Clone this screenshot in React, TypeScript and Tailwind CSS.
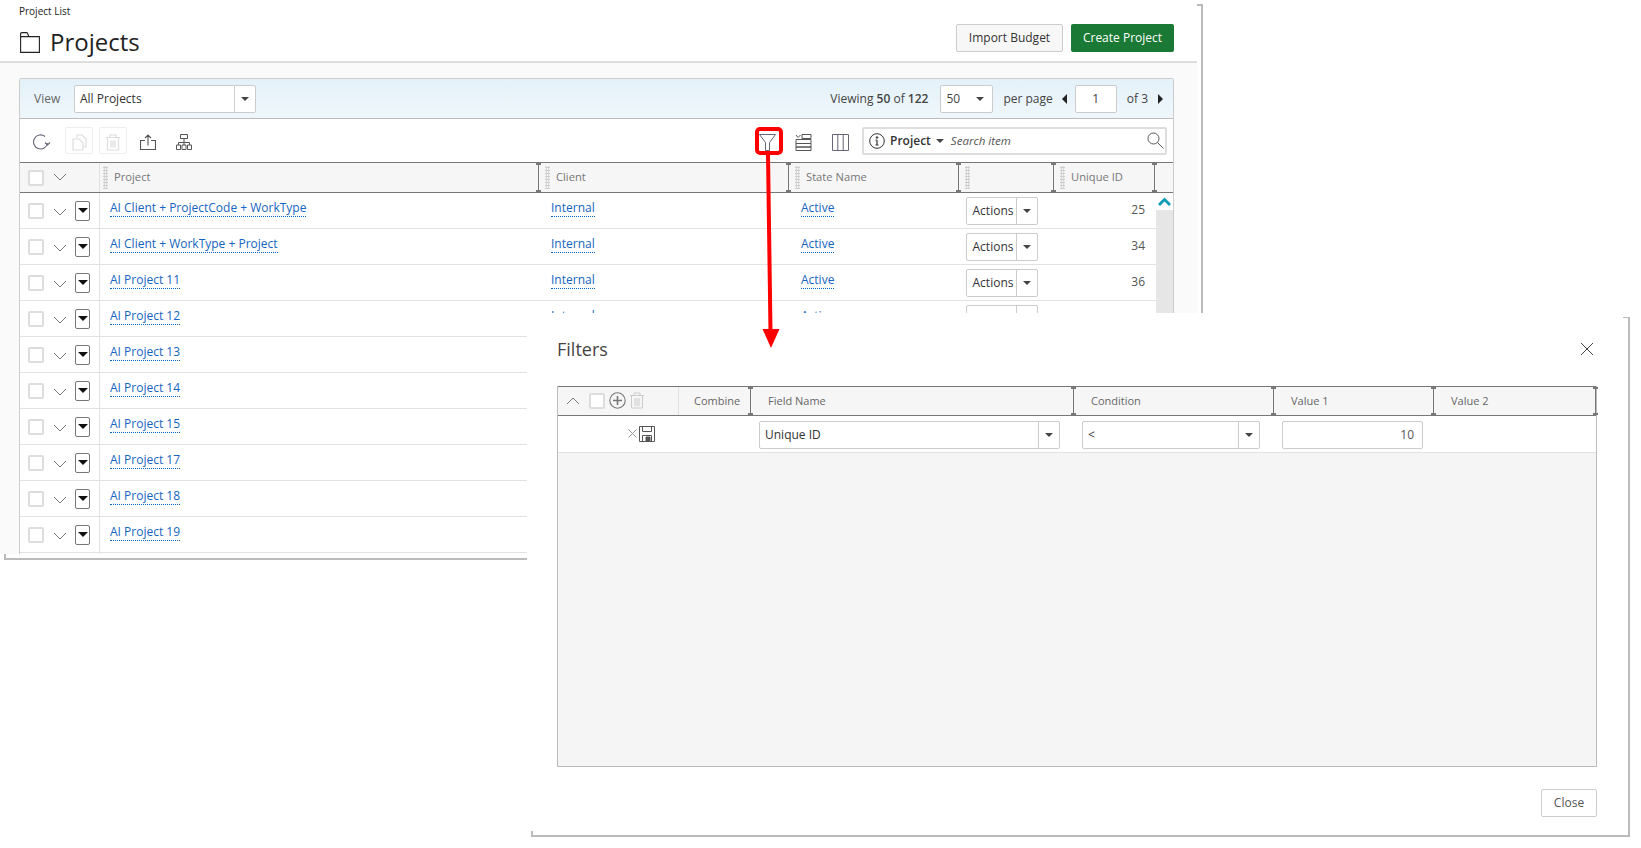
import React from "react";

const rows = ["AI Client + ProjectCode + WorkType", "AI Client + WorkType + Project", "AI Project 11", "AI Project 12", "AI Project 13", "AI Project 14", "AI Project 15", "AI Project 17", "AI Project 18", "AI Project 19"];
const ids = ["25", "34", "36"];

function Caret({ className = "" }: { className?: string }) {
  return <span className={`inline-block w-0 h-0 border-x-[4px] border-x-transparent border-t-[4px] border-t-[#444] ${className}`} />;
}

function Chevron({ up = false }: { up?: boolean }) {
  return (
    <svg width="14" height="9" viewBox="0 0 14 9" fill="none" stroke="#777" strokeWidth="1">
      <path d={up ? "M1 8L7 2l6 6" : "M1 1l6 6 6-6"} />
    </svg>
  );
}

function CheckBox() {
  return <span className="block w-[16px] h-[16px] border-2 border-[#ddd] rounded-[2px] bg-white" />;
}

function Grip() {
  return <span className="block w-[5px] h-[23px] shrink-0 bg-[radial-gradient(#ccc_1px,transparent_1px)] bg-[length:2.5px_3px]" />;
}

function Resizer() {
  return (
    <span className="relative block w-[1px] h-full bg-[#777] shrink-0">
      <span className="absolute top-0 left-[-2px] w-[5px] h-[2px] bg-[#777]" />
      <span className="absolute bottom-0 left-[-2px] w-[5px] h-[2px] bg-[#777]" />
    </span>
  );
}

function HeadCell({ w, label, first = false }: { w: string; label: string; first?: boolean }) {
  return (
    <div className={`${w} h-full flex items-center shrink-0`}>
      <div className={first ? "ml-[3px] mr-[6px]" : "ml-[6px] mr-[6px]"}><Grip /></div>
      <span className="flex-1 text-[11.2px] text-[#777]">{label}</span>
      <Resizer />
    </div>
  );
}

function ToolIcon({ children, boxed = false }: { children: React.ReactNode; boxed?: boolean }) {
  return (
    <span className={`h-[27px] flex items-center justify-center rounded-[2px] pt-[3px] ${boxed ? "w-[28px] border border-[#eee]" : "w-[28px]"}`}>
      {children}
    </span>
  );
}

function LinkText({ children }: { children: React.ReactNode }) {
  return <a className="text-[12px] leading-[17px] text-[#1565c0] border-b border-dotted border-[#0a66c2] mt-[-5px]">{children}</a>;
}

function Row({ name, id, index }: { name: string; id?: string; index: number }) {
  const full = index < 4;
  return (
    <div className="h-[36px] flex border-b border-[#e2e2e2] shrink-0">
      <div className="w-[80px] flex items-center border-r border-[#e2e2e2] shrink-0">
        <span className="ml-[8px]"><CheckBox /></span>
        <span className="ml-[9px] mt-[3px]"><Chevron /></span>
        <span className="ml-[8px] w-[15px] h-[20px] border border-[#777] rounded-[2px] flex items-center justify-center bg-white">
          <span className="block w-0 h-0 border-x-[5px] border-x-transparent border-t-[5px] border-t-[#111]" />
        </span>
      </div>
      <div className="w-[450px] flex items-center pl-[10px] shrink-0">{name && <LinkText>{name}</LinkText>}</div>
      {full && (
        <>
          <div className="w-[251px] flex items-center pl-[1px] shrink-0"><LinkText>Internal</LinkText></div>
          <div className="w-[165px] flex items-center shrink-0"><LinkText>Active</LinkText></div>
          <div className="w-[90px] flex items-center shrink-0">
            <div className="w-[72px] h-[28px] border border-[#ccc] rounded-[2px] flex items-center bg-white">
              <span className="w-[50px] text-center text-[12px] text-[#333] border-r border-[#ccc] leading-[26px] pl-[3px]">Actions</span>
              <span className="flex-1 flex justify-center"><Caret /></span>
            </div>
          </div>
          <div className="w-[100px] flex items-center justify-end pr-[11px] pb-[2px] text-[12px] text-[#555] shrink-0">{id}</div>
        </>
      )}
    </div>
  );
}

function SelectBox({ w, label, pad = "pl-[6px]" }: { w: string; label: string; pad?: string }) {
  return (
    <div className={`${w} h-[28px] border border-[#ccc] rounded-[2px] bg-white flex items-center shrink-0`}>
      <span className={`flex-1 ${pad} text-[12px] text-[#333] leading-[26px]`}>{label}</span>
      <span className="w-[21px] h-full border-l border-[#ccc] flex items-center justify-center"><Caret /></span>
    </div>
  );
}

export default function App() {
  return (
    <div className="relative w-[1641px] h-[848px] bg-white overflow-hidden [font-family:'Open_Sans',sans-serif]">
      {/* background window frame */}
      <div className="absolute left-[4px] top-[4px] w-[1199px] h-[556px] border-r-2 border-b-2 border-[#bbb]" />
      <span className="absolute left-[1197px] top-[4px] w-[5px] h-[2px] bg-[#bbb]" />
      <span className="absolute left-[4px] top-[553px] w-[2px] h-[6px] bg-[#bbb]" />

      {/* page */}
      <div className="absolute left-0 top-0 w-[1197px] h-[554px] bg-[#fafafa] overflow-hidden flex flex-col">
        <header className="h-[63px] bg-white border-b-2 border-[#ddd] pl-[20px] pr-[23px] shrink-0">
          <div className="text-[10px] leading-[14px] pt-[4px] -ml-px text-[#222] h-[18px]">Project List</div>
          <div className="flex items-start justify-between mt-[6px]">
            <div className="flex items-center mt-[3px]">
              <svg width="20" height="21" viewBox="0 0 20 21" fill="none" stroke="#222" strokeWidth="1.1">
                <path d="M.6 20.400V2q0-1.400 1.400-1.400h5l2 4h10.400v15.800zM.6 4.600H9" />
              </svg>
              <h1 className="ml-[10px] text-[24px] leading-[30px] text-[#222]">Projects</h1>
            </div>
            <div className="flex gap-[8px]">
              <button className="w-[107px] h-[28px] border border-[#ccc] rounded-[2px] bg-[#f7f7f7] text-[12px] text-[#333]">Import Budget</button>
              <button className="w-[103px] h-[28px] rounded-[2px] bg-[#1a7a35] text-[12px] text-white">Create Project</button>
            </div>
          </div>
        </header>

        <section className="ml-[19px] w-[1155px] mt-[15px] bg-white border border-[#ccc] rounded-t-[2px] flex flex-col shrink-0">
          <div className="h-[40px] flex items-center bg-gradient-to-b from-[#e4f1f9] to-[#eff7fb] border-b border-[#bbb] pl-[14px] pr-[10px] text-[12px] text-[#444]">
            <span className="text-[#666] w-[40px]">View</span>
            <SelectBox w="w-[182px]" label="All Projects" pad="pl-[5px]" />
            <span className="ml-auto">Viewing <b className="font-semibold">50</b> of <b className="font-semibold">122</b></span>
            <div className="w-[53px] h-[28px] border border-[#ccc] rounded-[2px] bg-white ml-[12px] flex items-center justify-between pl-[5px] pr-[8px]">
              <span>50</span><Caret />
            </div>
            <span className="ml-[10px]">per page</span>
            <span className="ml-[9px] w-0 h-0 border-y-[5px] border-y-transparent border-r-[5px] border-r-[#222]" />
            <div className="ml-[8px] w-[42px] h-[28px] border border-[#ccc] rounded-[2px] bg-white flex items-center justify-center">1</div>
            <span className="ml-[10px]">of 3</span>
            <span className="ml-[10px] w-0 h-0 border-y-[5px] border-y-transparent border-l-[5px] border-l-[#222]" />
          </div>

          <div className="h-[43px] flex items-center pl-[7px] pr-[6px]">
            <ToolIcon>
              <svg width="19" height="17" viewBox="0 0 19 17" fill="none" stroke="#667" strokeWidth="1.1">
                <path d="M15.500 9a7 7 0 1 1-2.500-6.500" /><path d="M13 8.500l2.500 2.500L18 8.500" />
              </svg>
            </ToolIcon>
            <span className="ml-[10px]"><ToolIcon boxed>
              <svg width="15" height="17" viewBox="0 0 15 17" fill="none" stroke="#ddd" strokeWidth="1.2">
                <path d="M5 4V1h5l4 4v8h-3" /><path d="M1 5h6l4 4v7H1z" />
              </svg>
            </ToolIcon></span>
            <span className="ml-[6px]"><ToolIcon boxed>
              <svg width="14" height="17" viewBox="0 0 14 17" fill="none" stroke="#ddd" strokeWidth="1.2">
                <path d="M0 3.500h14M4 3.500V1h6v2.500M1.500 3.500V16h11V3.500M5 6.500v7M7 6.500v7M9 6.500v7" />
              </svg>
            </ToolIcon></span>
            <span className="ml-[7px]"><ToolIcon>
              <svg width="16" height="16" viewBox="0 0 16 16" fill="none" stroke="#555" strokeWidth="1.100">
                <path d="M5 6.500H.5v9h15v-9H11M8 11.500V1M5 4l3-3 3 3" />
              </svg>
            </ToolIcon></span>
            <span className="ml-[8px]"><ToolIcon>
              <svg width="16" height="16" viewBox="0 0 16 16" fill="none" stroke="#555" strokeWidth="1">
                <path d="M4.500.500h7v4h-7zM8 4.500v4M2.500 11V8.500h11V11M8 8.500V11M.5 11h4v4.500h-4zM6 11h4v4.500H6zM11.500 11h4v4.500h-4z" />
              </svg>
            </ToolIcon></span>

            <span className="ml-auto mr-[19px] pt-[3px]">
              <svg className="block" width="17" height="17" viewBox="0 0 17 17" fill="none" stroke="#667" strokeWidth="1">
                <path d="M.5.500h16L10.500 8.500v8h-4v-8z" />
              </svg>
            </span>
            <span className="mr-[20px] pt-[3px]">
              <svg className="block" width="17" height="17" viewBox="0 0 17 17" fill="none" stroke="#555" strokeWidth="1">
                <path d="M1 1l2 2.500L5.500 1M7 .5h9v4H7zM1 5.500h15v4H1zM1 9.500h15v3.500H1zM1 13h15v3.500H1z" />
              </svg>
            </span>
            <span className="mr-[13px] pt-[3px]">
              <svg className="block" width="17" height="17" viewBox="0 0 17 17" fill="none" stroke="#667" strokeWidth="1">
                <path d="M.5.500h16v16H.5zM5.800.500v16M11.200.500v16" />
              </svg>
            </span>
            <div className="w-[305px] h-[28px] border-2 border-[#ddd] rounded-[2px] flex items-center pl-[5px] pr-[1px] bg-white">
              <svg width="16" height="16" viewBox="0 0 16 16" fill="none" stroke="#333" strokeWidth="1">
                <circle cx="8" cy="8" r="7.300" /><path d="M8 7v5M6.500 12h3M6.500 7H8" strokeWidth="1.200" /><circle cx="8" cy="4.500" r=".8" fill="#333" />
              </svg>
              <span className="ml-[5px] text-[12px] font-semibold text-[#333]">Project</span>
              <Caret className="ml-[5px]" />
              <span className="ml-[7px] flex-1 text-[11.5px] italic text-[#555]">Search item</span>
              <svg width="17" height="17" viewBox="0 0 17 17" fill="none" stroke="#555" strokeWidth="1">
                <circle cx="6.500" cy="6.500" r="5.500" /><path d="M10.500 10.500l6 6" />
              </svg>
            </div>
          </div>

          <div className="h-[31px] flex items-center bg-[#f6f6f6] border-y border-[#777]">
            <div className="w-[80px] h-full flex items-center border-r border-[#e2e2e2] shrink-0">
              <span className="ml-[8px]"><CheckBox /></span>
              <span className="ml-[9px]"><Chevron /></span>
            </div>
            <HeadCell w="w-[439px]" label="Project" first />
            <HeadCell w="w-[250px]" label="Client" />
            <HeadCell w="w-[170px]" label="State Name" />
            <HeadCell w="w-[95px]" label="" />
            <HeadCell w="w-[101px]" label="Unique ID" />
          </div>

          <div className="flex">
            <div className="w-[1136px] flex flex-col shrink-0">
              {rows.map((r, i) => <Row key={r} name={r} id={ids[i]} index={i} />)}
              <Row name="" index={10} />
            </div>
            <div className="flex-1 bg-[#e6e6e6]">
              <div className="h-[17px] bg-white flex items-start justify-center pt-[4px]">
                <svg width="13" height="9" viewBox="0 0 13 9" fill="none" stroke="#0a9bb5" strokeWidth="2.800"><path d="M1 8l5.500-5.500L12 8" /></svg>
              </div>
            </div>
          </div>
        </section>
      </div>

      {/* dialog */}
      <div className="absolute left-[527px] top-[313px] w-[1114px] h-[535px] bg-white">
        <div className="absolute left-[4px] top-[4px] w-[1099px] h-[520px] border-r-2 border-b-2 border-[#bbb]" />
        <span className="absolute left-[1096px] top-[4px] w-[5px] h-[1px] bg-[#bbb]" />
        <span className="absolute left-[4px] top-[518px] w-[2px] h-[5px] bg-[#bbb]" />
        <div className="relative pl-[30px] pr-[44px] pt-[23px] flex flex-col h-[504px]">
          <div className="flex items-center justify-between h-[28px]">
            <h2 className="text-[18px] text-[#444]">Filters</h2>
            <svg className="mr-[3px] mt-[-2px]" width="14" height="14" viewBox="0 0 14 14" fill="none" stroke="#444" strokeWidth="1"><path d="M1 1l12 12M13 1L1 13" /></svg>
          </div>
          <div className="mt-[22px] w-[1040px] h-[382px] border border-[#bbb] bg-[#f5f5f5] flex flex-col">
            <div className="h-[30px] flex bg-[#f6f6f6] border-y border-y-[#777] -mt-px shrink-0 items-center">
              <div className="w-[121px] h-full flex items-center border-r border-[#e2e2e2] shrink-0">
                <span className="ml-[8px]"><Chevron up /></span>
                <span className="ml-[9px]"><CheckBox /></span>
                <svg className="ml-[4px]" width="17" height="17" viewBox="0 0 17 17" fill="none" stroke="#777" strokeWidth="1.100"><circle cx="8.500" cy="8.500" r="7.700" /><path d="M8.500 4v9M4 8.500h9" strokeWidth="1.600" /></svg>
                <svg className="ml-[4px]" width="14" height="17" viewBox="0 0 14 17" fill="none" stroke="#ccc" strokeWidth="1"><path d="M0 3.500h14M4 3.500V1h6v2.500M1.500 3.500V16h11V3.500M5 6v8M7 6v8M9 6v8" /></svg>
              </div>
              <div className="w-[72px] h-full flex items-center shrink-0">
                <span className="flex-1 pl-[15px] text-[11px] text-[#666]">Combine</span><Resizer />
              </div>
              <div className="w-[323px] h-full flex items-center shrink-0">
                <span className="flex-1 pl-[17px] text-[11px] text-[#666]">Field Name</span><Resizer />
              </div>
              <div className="w-[200px] h-full flex items-center shrink-0">
                <span className="flex-1 pl-[17px] text-[11px] text-[#666]">Condition</span><Resizer />
              </div>
              <div className="w-[160px] h-full flex items-center shrink-0">
                <span className="flex-1 pl-[17px] text-[11px] text-[#666]">Value 1</span><Resizer />
              </div>
              <div className="flex-1 h-full flex items-center">
                <span className="flex-1 pl-[17px] text-[11px] text-[#666]">Value 2</span><Resizer />
              </div>
            </div>
            <div className="h-[37px] bg-white border-b border-[#e2e2e2] flex items-center shrink-0">
              <div className="w-[97px] flex justify-end items-center gap-[2px] shrink-0">
                <svg width="9" height="9" viewBox="0 0 9 9" stroke="#999" strokeWidth="1"><path d="M.5.500l8 8M8.500.500l-8 8" /></svg>
                <svg width="16" height="16" viewBox="0 0 16 16" fill="none" stroke="#555" strokeWidth="1"><path d="M.5.500h15v15H.5zM3.500.500v5h9v-5M3.500 15.500v-6h9v6" /><path d="M7 11h4v4.500H7z" fill="#555" /></svg>
              </div>
              <span className="ml-[104px] mt-[2px]"><SelectBox w="w-[301px]" label="Unique ID" pad="pl-[5px]" /></span>
              <span className="ml-[22px] mt-[2px]"><SelectBox w="w-[178px]" label="<" pad="pl-[5px]" /></span>
              <div className="ml-[22px] mt-[2px] w-[141px] h-[28px] border border-[#ccc] rounded-[2px] flex items-center justify-end pr-[8px] text-[12px] text-[#555]">10</div>
            </div>
          </div>
          <div className="flex justify-end w-[1040px] mt-[22px]">
            <button className="w-[56px] h-[28px] border border-[#ccc] rounded-[2px] bg-white text-[12px] text-[#555]">Close</button>
          </div>
        </div>
      </div>

      {/* annotation */}
      <span className="absolute left-[755px] top-[127px] w-[28px] h-[28px] border-[4px] border-[#ff0000] rounded-[5px]" />
      <svg className="absolute left-[755px] top-[150px]" width="30" height="200" viewBox="0 0 30 200" fill="none">
        <path d="M13 4L15.500 182" stroke="#f00" strokeWidth="4" />
        <path d="M7.500 179h17l-8.500 19z" fill="#f00" />
      </svg>
    </div>
  );
}
